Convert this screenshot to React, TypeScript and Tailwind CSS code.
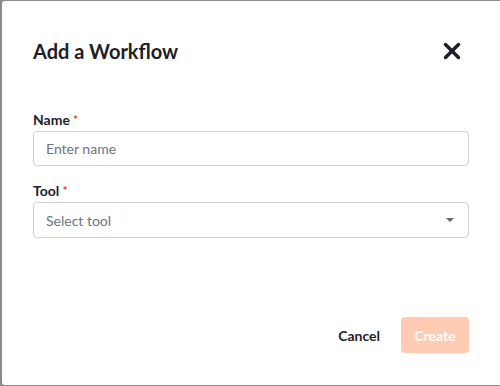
import { X } from 'lucide-react';

export default function App() {
    return (
        <div className="w-[500px] h-[386px] bg-[#8a8a8a] pt-px pb-px pl-[2px] font-['Lato','Open_Sans',sans-serif]">
            <div className="h-full bg-white rounded-l-[3px] pl-[31px] pr-[31px] flex flex-col">
                {/* Header */}
                <div className="flex items-center justify-between pt-[29px] h-[70px]">
                    <h2 className="text-[20px] font-bold text-[#1d2127] leading-none">Add a Workflow</h2>
                    <X className="w-[26px] h-[26px] text-[#1d2127] mr-[4px]" strokeWidth={3.2} />
                </div>

                {/* Form */}
                <div className="mt-[40px] flex flex-col">
                    <label className="text-[14px] font-bold text-[#1d2127] leading-[18px]">
                        Name <span className="text-[#e53935] text-[11px] align-top">*</span>
                    </label>
                    <input
                        placeholder="Enter name"
                        className="mt-[2px] h-[35px] border border-[#cdd1d5] rounded-[4px] px-[12px] text-[14px] text-[#1d2127] placeholder:text-[#6c7480] outline-none"
                    />
                    <label className="mt-[16px] text-[14px] font-bold text-[#1d2127] leading-[18px]">
                        Tool <span className="text-[#e53935] text-[11px] align-top">*</span>
                    </label>
                    <div className="mt-[2px] h-[36px] border border-[#cdd1d5] rounded-[4px] pl-[12px] pr-[12px] flex items-center justify-between">
                        <span className="text-[14px] text-[#6c7480]">Select tool</span>
                        <svg width="8" height="4" viewBox="0 0 8 4" className="mr-[2px]">
                            <path d="M0 0h8L4 4z" fill="#5f6670" />
                        </svg>
                    </div>
                </div>

                {/* Footer */}
                <div className="mt-auto mb-[32px] flex items-center justify-end gap-[21px]">
                    <button className="text-[14px] font-bold text-[#1d2127]">Cancel</button>
                    <button className="h-[36px] w-[68px] rounded-[4px] bg-[#ffcbb3] text-white text-[14px] font-bold">
                        Create
                    </button>
                </div>
            </div>
        </div>
    );
}
